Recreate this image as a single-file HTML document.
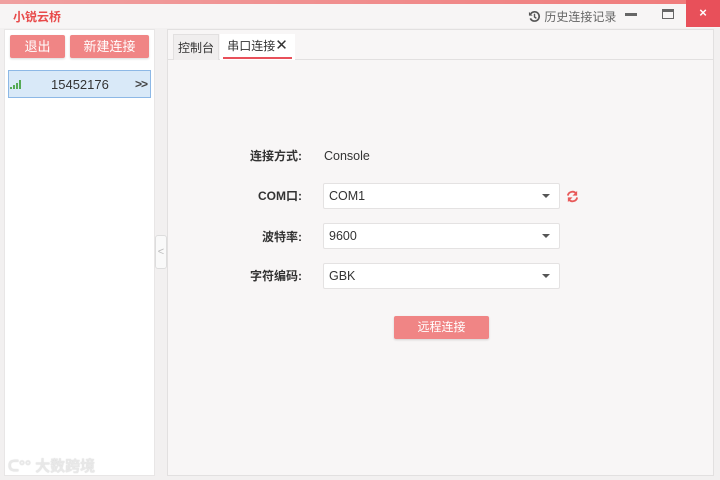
<!DOCTYPE html>
<html><head><meta charset="utf-8"><style>
*{margin:0;padding:0;box-sizing:border-box}
body{width:720px;height:480px;overflow:hidden;background:#f2f0f0;font-family:"Liberation Sans","Noto Sans CJK SC",sans-serif;position:relative;font-size:12px;color:#333}
.a{position:absolute}
.btn{position:absolute;background:#f08585;color:#fff;border-radius:2px;text-align:center;font-size:13px;box-shadow:0 1px 2px rgba(0,0,0,.15)}
.lbl{position:absolute;right:418px;font-size:12px;font-weight:bold;color:#333;text-align:right}
.sel{position:absolute;left:323px;width:237px;height:26px;background:#fff;border:1px solid #e4e2e2;border-radius:2px;padding-left:5px;line-height:24px;font-size:12.5px;color:#333}
.sel:after{content:"";position:absolute;right:9px;top:10px;border-left:4px solid transparent;border-right:4px solid transparent;border-top:4px solid #555}
</style></head><body>
<div class="a" style="left:0;top:0;width:720px;height:4px;background:linear-gradient(90deg,#f0a0a0,#f07a7a)"></div>
<div class="a" style="left:0;top:4px;width:720px;height:24px;background:#f7f5f5"></div>
<div class="a" style="left:13px;top:8px;color:#e84a4a;font-size:12px;font-weight:bold">小锐云桥</div>
<div class="a" style="left:528px;top:8px;color:#666;font-size:12px">
<svg width="13" height="13" viewBox="0 0 14 14" style="vertical-align:-2px"><path d="M3 4A5 5 0 1 1 2.5 9" fill="none" stroke="#555" stroke-width="1.8"/><path d="M1 2v4h4z" fill="#555"/><path d="M7 4v3.5l2 1.5" fill="none" stroke="#555" stroke-width="1.5"/></svg> 历史连接记录</div>
<div class="a" style="left:625px;top:13px;width:12px;height:3px;background:#666"></div>
<div class="a" style="left:662px;top:9px;width:12px;height:10px;border:1.5px solid #666;border-top-width:3px"></div>
<div class="a" style="left:686px;top:0;width:34px;height:27px;background:#e8505a;color:#fff;text-align:center;line-height:26px;font-weight:bold;font-size:13px">×</div>

<div class="a" style="left:4px;top:29px;width:151px;height:447px;background:#fff;border:1px solid #e8e6e6"></div>
<div class="btn" style="left:10px;top:35px;width:55px;height:23px;line-height:23px">退出</div>
<div class="btn" style="left:70px;top:35px;width:79px;height:23px;line-height:23px">新建连接</div>
<div class="a" style="left:8px;top:70px;width:143px;height:28px;background:#d9e9f8;border:1px solid #8db8e6"></div>
<svg class="a" style="left:10px;top:78px" width="14" height="12"><rect x="0" y="9" width="2" height="2" fill="#5a5"/><rect x="3" y="7" width="2" height="4" fill="#5a5"/><rect x="6" y="5" width="2" height="6" fill="#5a5"/><rect x="9" y="2" width="2" height="9" fill="#5a5"/></svg>
<div class="a" style="left:51px;top:77px;font-size:13px;color:#333">15452176</div>
<div class="a" style="left:135px;top:77px;font-size:12px;color:#444;font-weight:bold;letter-spacing:-1px">&gt;&gt;</div>
<div class="a" style="left:8px;top:455px;font-size:15px;color:#e8e8e8;font-weight:bold;text-shadow:0 0 1px #ccc">ᑕ°° 大数跨境</div>

<div class="a" style="left:155px;top:235px;width:12px;height:34px;background:#f9f9f9;border:1px solid #ddd;border-radius:3px;color:#bbb;font-size:11px;line-height:32px;text-align:center">&lt;</div>

<div class="a" style="left:167px;top:29px;width:547px;height:447px;background:#f8f6f6;border:1px solid #e2e0e0"></div>
<div class="a" style="left:168px;top:59px;width:545px;height:1px;background:#e2e0e0"></div>
<div class="a" style="left:173px;top:34px;width:46px;height:26px;background:#f0eeee;border:1px solid #e2e0e0;border-bottom:none;text-align:center;line-height:26px;font-size:12px">控制台</div>
<div class="a" style="left:220px;top:34px;width:75px;height:26px;background:#fff;text-align:center;line-height:24px;font-size:12px">串口连接<span style="font-size:15px">✕</span></div>
<div class="a" style="left:223px;top:57px;width:69px;height:2px;background:#e8505a"></div>

<div class="lbl" style="top:147px">连接方式:</div>
<div class="a" style="left:324px;top:149px;font-size:12.5px">Console</div>
<div class="lbl" style="top:187px">COM口:</div>
<div class="sel" style="top:183px">COM1</div>
<svg class="a" style="left:566px;top:190px" width="13" height="13" viewBox="0 0 14 14"><path d="M2 6A5 5 0 0 1 11 4M12 8A5 5 0 0 1 3 10" fill="none" stroke="#e85a5a" stroke-width="2"/><path d="M12 1v5h-5z M2 13v-5h5z" fill="#e85a5a"/></svg>
<div class="lbl" style="top:228px">波特率:</div>
<div class="sel" style="top:223px">9600</div>
<div class="lbl" style="top:267px">字符编码:</div>
<div class="sel" style="top:263px">GBK</div>
<div class="btn" style="left:394px;top:316px;width:95px;height:23px;line-height:23px;font-size:12px">远程连接</div>
</body></html>
